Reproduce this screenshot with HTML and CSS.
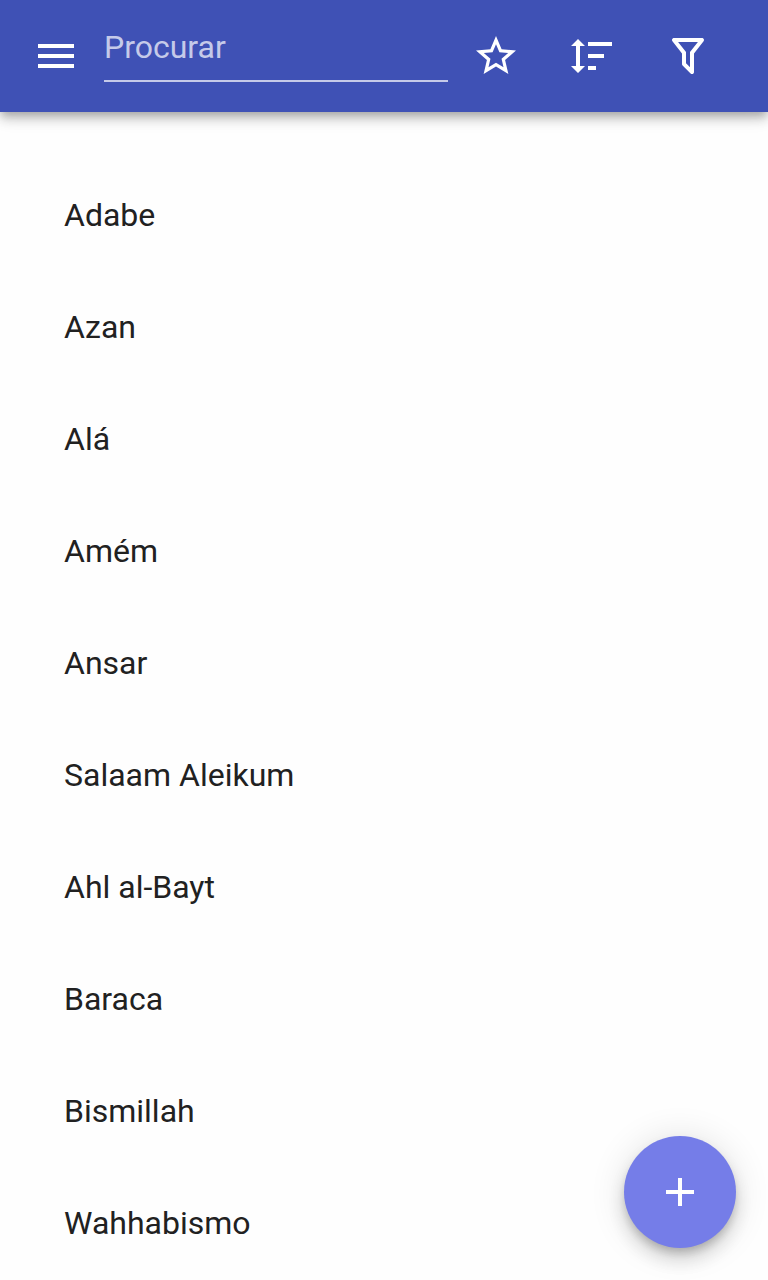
FILE: index.html
```html
<!DOCTYPE html>
<html lang="pt">
<head>
    <meta charset="UTF-8">
    <meta name="viewport" content="width=device-width, initial-scale=1.0">
    <title>Dicionário</title>
    <link rel="stylesheet" href="styles.css">
</head>
<body>
    <header class="toolbar">
        <button class="icon-btn menu-btn" aria-label="Menu">
            <svg viewBox="0 0 24 24"><path d="M3 18h18v-2H3v2zm0-5h18v-2H3v2zm0-7v2h18V6H3z"/></svg>
        </button>
        <input class="search" type="text" placeholder="Procurar">
        <div class="actions">
            <button class="icon-btn" aria-label="Favoritos">
                <svg viewBox="0 0 24 24"><path d="M12 15.39l-3.76 2.27.99-4.28-3.32-2.88 4.38-.37L12 6.09l1.71 4.04 4.38.37-3.32 2.88.99 4.28M22 9.24l-7.19-.61L12 2 9.19 8.63 2 9.24l5.45 4.73L5.82 21 12 17.27 18.18 21l-1.64-7.03L22 9.24z"/></svg>
            </button>
            <button class="icon-btn" aria-label="Ordenar">
                <svg viewBox="0 0 24 24"><path d="M10 13v-2h8v2h-8m0 6v-2h4v2h-4m0-12V5h12v2H10M6 17h2.5L5 20.5 1.5 17H4V7H1.5L5 3.5 8.5 7H6v10z"/></svg>
            </button>
            <button class="icon-btn" aria-label="Filtrar">
                <svg viewBox="0 0 24 24"><path d="M15 19.88c.04.3-.06.62-.29.83-.39.39-1.02.39-1.41 0L9.29 16.7c-.23-.23-.33-.54-.29-.84v-5.11L4.21 4.62c-.34-.43-.26-1.06.17-1.4.19-.14.4-.22.62-.22h14c.22 0 .43.08.62.22.43.34.51.97.17 1.4L15 10.75v9.13M7.04 5L11 10.06v5.52l2 2v-7.53L16.96 5H7.04z"/></svg>
            </button>
        </div>
    </header>

    <ul class="list">
        <li class="list-item">Adabe</li>
        <li class="list-item">Azan</li>
        <li class="list-item">Alá</li>
        <li class="list-item">Amém</li>
        <li class="list-item">Ansar</li>
        <li class="list-item">Salaam Aleikum</li>
        <li class="list-item">Ahl al-Bayt</li>
        <li class="list-item">Baraca</li>
        <li class="list-item">Bismillah</li>
        <li class="list-item">Wahhabismo</li>
    </ul>

    <button class="fab" aria-label="Adicionar">
        <svg viewBox="0 0 24 24"><path d="M19 13h-6v6h-2v-6H5v-2h6V5h2v6h6v2z"/></svg>
    </button>
</body>
</html>
```
FILE: styles.css
```css
* {
    margin: 0;
    padding: 0;
    box-sizing: border-box;
}

body {
    background-color: #fefefe;
    color: #212121;
    font-family: Roboto, sans-serif;
    font-size: 32px;
    height: 100vh;
    overflow: hidden;
}

button {
    border: none;
    background: none;
    cursor: pointer;
}

svg {
    display: block;
    fill: #ffffff;
}

.toolbar {
    display: flex;
    height: 112px;
    padding-left: 32px;
    background-color: #3f51b5;
    box-shadow: 0 4px 8px -2px rgba(0, 0, 0, 0.2), 0 8px 10px rgba(0, 0, 0, 0.14), 0 2px 20px rgba(0, 0, 0, 0.12);
}

.icon-btn {
    display: flex;
    align-items: center;
    justify-content: center;
    width: 96px;
    height: 112px;
}

.icon-btn svg {
    width: 48px;
    height: 48px;
}

.menu-btn {
    width: 48px;
    margin-right: 24px;
}

.search {
    width: 344px;
    height: 68px;
    margin-top: 14px;
    padding-bottom: 1px;
    border: none;
    border-bottom: 2px solid #c5cae9;
    outline: none;
    background: none;
    color: #ffffff;
    font: inherit;
}

.search::placeholder {
    color: #c5cae9;
}

.actions {
    display: flex;
}

.list {
    padding-top: 47px;
    list-style: none;
}

.list-item {
    height: 112px;
    padding-left: 64px;
    line-height: 112px;
}

.fab {
    position: fixed;
    right: 32px;
    bottom: 32px;
    display: flex;
    align-items: center;
    justify-content: center;
    width: 112px;
    height: 112px;
    border-radius: 50%;
    background-color: #757de8;
    box-shadow: 0 6px 10px -2px rgba(0, 0, 0, 0.2), 0 12px 20px rgba(0, 0, 0, 0.14), 0 2px 36px rgba(0, 0, 0, 0.12);
}

.fab svg {
    width: 48px;
    height: 48px;
}
```
